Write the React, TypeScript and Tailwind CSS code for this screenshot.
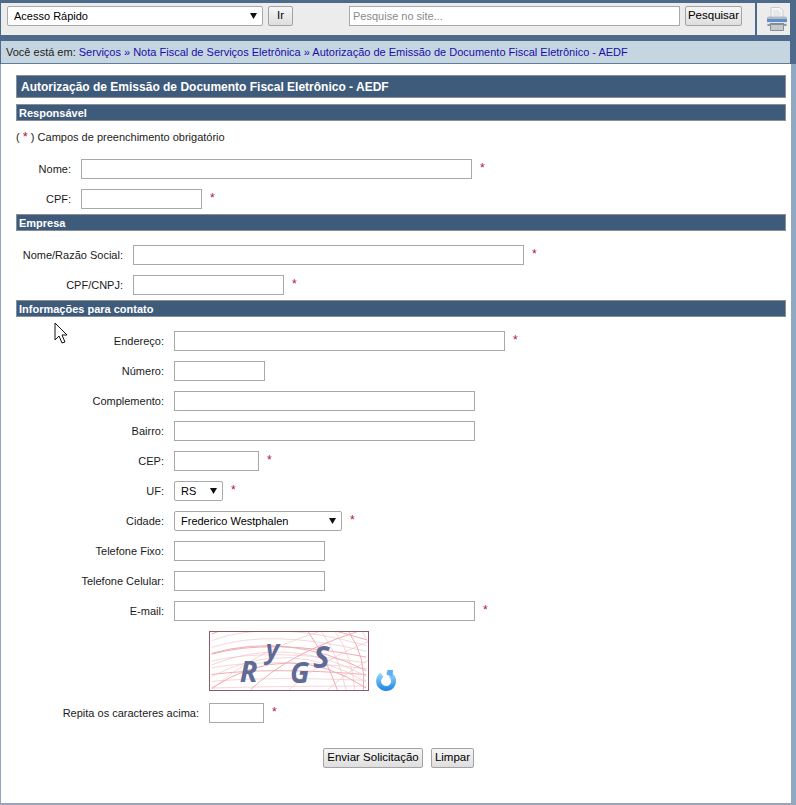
import React from "react";

const font = { fontFamily: '"Liberation Sans", Arial, sans-serif' };

function Bar({ children }: { children: React.ReactNode }) {
  return (
    <div className="h-[17px] border border-[#8a8f94] bg-[#3f5b7b] pl-[2px] text-[11px] font-bold leading-[16px] text-white">
      {children}
    </div>
  );
}

function Star({ ml = "ml-2" }: { ml?: string }) {
  return <span className={`${ml} relative top-[-1px] text-[12px] leading-none text-[#b3123c]`}>*</span>;
}

function Row({ label, w, width, req = true }: { label: string; w: string; width: string; req?: boolean }) {
  return (
    <div className="flex h-[30px] items-center">
      <label className={`${w} mr-[10px] shrink-0 whitespace-nowrap text-right text-[11px] text-[#1a1a1a]`}>{label}</label>
      <input className={`${width} h-[20px] border border-[#a9a9a9] bg-white outline-none`} />
      {req && <Star />}
    </div>
  );
}

function Select({ value, width }: { value: string; width: string }) {
  return (
    <div className={`relative ${width} h-[20px]`}>
      <select className="h-full w-full appearance-none rounded-[2px] border border-[#a9a9a9] bg-white pl-[6px] text-[11px] text-black outline-none" defaultValue={value}>
        <option>{value}</option>
      </select>
      <svg className="pointer-events-none absolute right-[6px] top-[7px]" width="7" height="6" viewBox="0 0 7 6">
        <path d="M0 0H7L3.5 6Z" fill="#111" />
      </svg>
    </div>
  );
}

function Btn({ children, className = "" }: { children: React.ReactNode; className?: string }) {
  return (
    <button className={`h-[20px] rounded-[2px] border border-[#a3a3a3] bg-gradient-to-b from-[#f6f6f6] to-[#dedede] p-0 text-[11.5px] leading-none text-black ${className}`}>
      {children}
    </button>
  );
}

function Printer() {
  return (
    <svg width="22" height="25" viewBox="0 0 22 25">
      <path d="M5 0.5H14L17 3.5V11H5Z" fill="#f4f5f6" stroke="#c9cdd1" />
      <path d="M7 4H13M7 6H15M7 8H15" stroke="#d8dbde" />
      <path d="M1 11Q1 9.5 3 9.5H19Q21 9.5 21 11V19H1Z" fill="#b4bac0" />
      <rect x="1" y="12" width="20" height="3" fill="#5d8fcf" />
      <rect x="1" y="15" width="20" height="2" fill="#dfe3e6" />
      <rect x="2" y="17" width="18" height="2" fill="#8f979e" />
      <path d="M4 16H18V23Q18 24 17 24H5Q4 24 4 23Z" fill="#878f96" />
      <rect x="5" y="18" width="12" height="5" fill="#c4c9cd" />
    </svg>
  );
}

function Captcha() {
  const lines: string[] = [];
  for (let i = 0; i < 9; i++) lines.push(`M0 ${2 + i * 7} Q60 ${-24 + i * 10} 160 ${8 + i * 6}`);
  for (let i = 0; i < 5; i++) lines.push(`M${100 + i * 14} 0 Q${118 + i * 14} 26 ${130 + i * 9} 60`);
  for (let i = 0; i < 4; i++) lines.push(`M${i * 40} 60 Q${i * 40 + 40} 22 ${i * 40 + 110} 0`);
  for (let i = 0; i < 4; i++) lines.push(`M0 ${58 - i * 12} Q80 ${6 - i * 2} 160 ${58 - i * 6}`);
  return (
    <svg width="160" height="60" viewBox="0 0 160 60" className="block border border-[#8c5a62] bg-white">
      {lines.map((d, i) => (
        <path key={i} d={d} fill="none" stroke={i % 3 === 0 ? "#efa9b1" : "#eec4c9"} strokeWidth={i % 3 === 0 ? 1 : 0.7} />
      ))}
      <g fill="#5f6a96" fontFamily='"Open Sans", sans-serif' fontWeight="700" fontStyle="italic">
        <text x="29" y="52" fontSize="30">R</text>
        <text x="56" y="28" fontSize="27">y</text>
        <text x="81" y="53" fontSize="29">G</text>
        <text x="105" y="37" fontSize="32">S</text>
      </g>
    </svg>
  );
}

function Refresh() {
  return (
    <svg width="22" height="22" viewBox="0 0 22 22">
      <defs>
        <linearGradient id="ref" x1="0" y1="0" x2="0" y2="1">
          <stop offset="0" stopColor="#8fd0fa" />
          <stop offset="1" stopColor="#2a8ee6" />
        </linearGradient>
      </defs>
      <path d="M7 5.8A7.5 7.5 0 1 0 15.5 6" fill="none" stroke="url(#ref)" strokeWidth="5" />
      <path d="M11.5 5.5L12.5 1L18 1L17.5 8Z" fill="#5fb0f0" />
    </svg>
  );
}

export default function App() {
  return (
    <div style={font} className="flex h-[805px] w-[796px] flex-col overflow-hidden bg-white text-[11px]">
      <div className="bg-[#4d6a8a] pl-px pr-[6px] pt-[3px]">
        <div className="flex h-[32px] bg-[#ececec]">
          <div className="flex w-[754px] items-start pl-[6px] pt-[3px]">
            <Select value="Acesso Rápido" width="w-[256px]" />
            <Btn className="ml-[5px] w-[25px]">Ir</Btn>
            <input placeholder="Pesquise no site..." className="ml-[56px] h-[20px] w-[331px] border border-[#a9a9a9] bg-white pl-[3px] text-[11px] outline-none placeholder:text-[#8a8a8a]" />
            <Btn className="ml-[5px] w-[57px]">Pesquisar</Btn>
          </div>
          <div className="flex flex-1 items-start justify-center border-l-2 border-[#4d6a8a] pl-[7px] pt-[4px]">
            <Printer />
          </div>
        </div>
        <div className="mt-[6px] flex h-[23px] items-center border-b border-[#5e7d9c] bg-[#c5d6e1] pl-[5px] text-[11px] text-[#222]">
          <span>Você está em:&nbsp;</span>
          <span className="text-[#1a0dab]">Serviços » Nota Fiscal de Serviços Eletrônica » Autorização de Emissão de Documento Fiscal Eletrônico - AEDF</span>
        </div>
      </div>
      <div className="relative flex-1 border-b-2 border-l border-r-[5px] border-[#8fa8c4] border-b-[#9aa6b8] pl-[15px] pr-[5px] pt-[11px]">
        <div className="flex h-[23px] items-center border border-[#8a8f94] bg-[#3f5b7b] pl-[4px] text-[12px] font-bold text-white">
          Autorização de Emissão de Documento Fiscal Eletrônico - AEDF
        </div>
        <div className="mt-[6px]">
          <Bar>Responsável</Bar>
        </div>
        <div className="mt-[9px] h-[14px] text-[11px] leading-[14px] text-[#222]">
          <span>( </span>
          <span className="text-[13px] text-[#b3123c]">*</span>
          <span> ) Campos de preenchimento obrigatório</span>
        </div>
        <div className="mt-[10px]">
          <Row label="Nome:" w="w-[55px]" width="w-[391px]" />
          <Row label="CPF:" w="w-[55px]" width="w-[121px]" />
        </div>
        <Bar>Empresa</Bar>
        <div className="mt-[9px]">
          <Row label="Nome/Razão Social:" w="w-[107px]" width="w-[391px]" />
          <Row label="CPF/CNPJ:" w="w-[107px]" width="w-[151px]" />
        </div>
        <Bar>Informações para contato</Bar>
        <div className="mt-[9px]">
          <Row label="Endereço:" w="w-[148px]" width="w-[331px]" />
          <Row label="Número:" w="w-[148px]" width="w-[91px]" req={false} />
          <Row label="Complemento:" w="w-[148px]" width="w-[301px]" req={false} />
          <Row label="Bairro:" w="w-[148px]" width="w-[301px]" req={false} />
          <Row label="CEP:" w="w-[148px]" width="w-[85px]" />
          <div className="flex h-[30px] items-center">
            <label className="mr-[10px] w-[148px] text-right text-[#1a1a1a]">UF:</label>
            <Select value="RS" width="w-[49px]" />
            <Star />
          </div>
          <div className="flex h-[30px] items-center">
            <label className="mr-[10px] w-[148px] text-right text-[#1a1a1a]">Cidade:</label>
            <Select value="Frederico Westphalen" width="w-[168px]" />
            <Star />
          </div>
          <Row label="Telefone Fixo:" w="w-[148px]" width="w-[151px]" req={false} />
          <Row label="Telefone Celular:" w="w-[148px]" width="w-[151px]" req={false} />
          <Row label="E-mail:" w="w-[148px]" width="w-[301px]" />
        </div>
        <div className="ml-[193px] mt-[5px] flex items-end">
          <Captcha />
          <div className="ml-[6px]">
            <Refresh />
          </div>
        </div>
        <div className="mt-[7px]">
          <Row label="Repita os caracteres acima:" w="w-[183px]" width="w-[55px]" />
        </div>
        <div className="ml-[307px] mt-[20px] flex gap-[8px]">
          <Btn className="w-[100px]">Enviar Solicitação</Btn>
          <Btn className="w-[43px]">Limpar</Btn>
        </div>
        <svg className="absolute left-[53px] top-[258px]" width="14" height="22" viewBox="0 0 14 22">
          <path d="M1 1V18L5 14L8 21L11 20L8 13H13Z" fill="#fff" stroke="#111" strokeWidth="1" />
        </svg>
      </div>
    </div>
  );
}
